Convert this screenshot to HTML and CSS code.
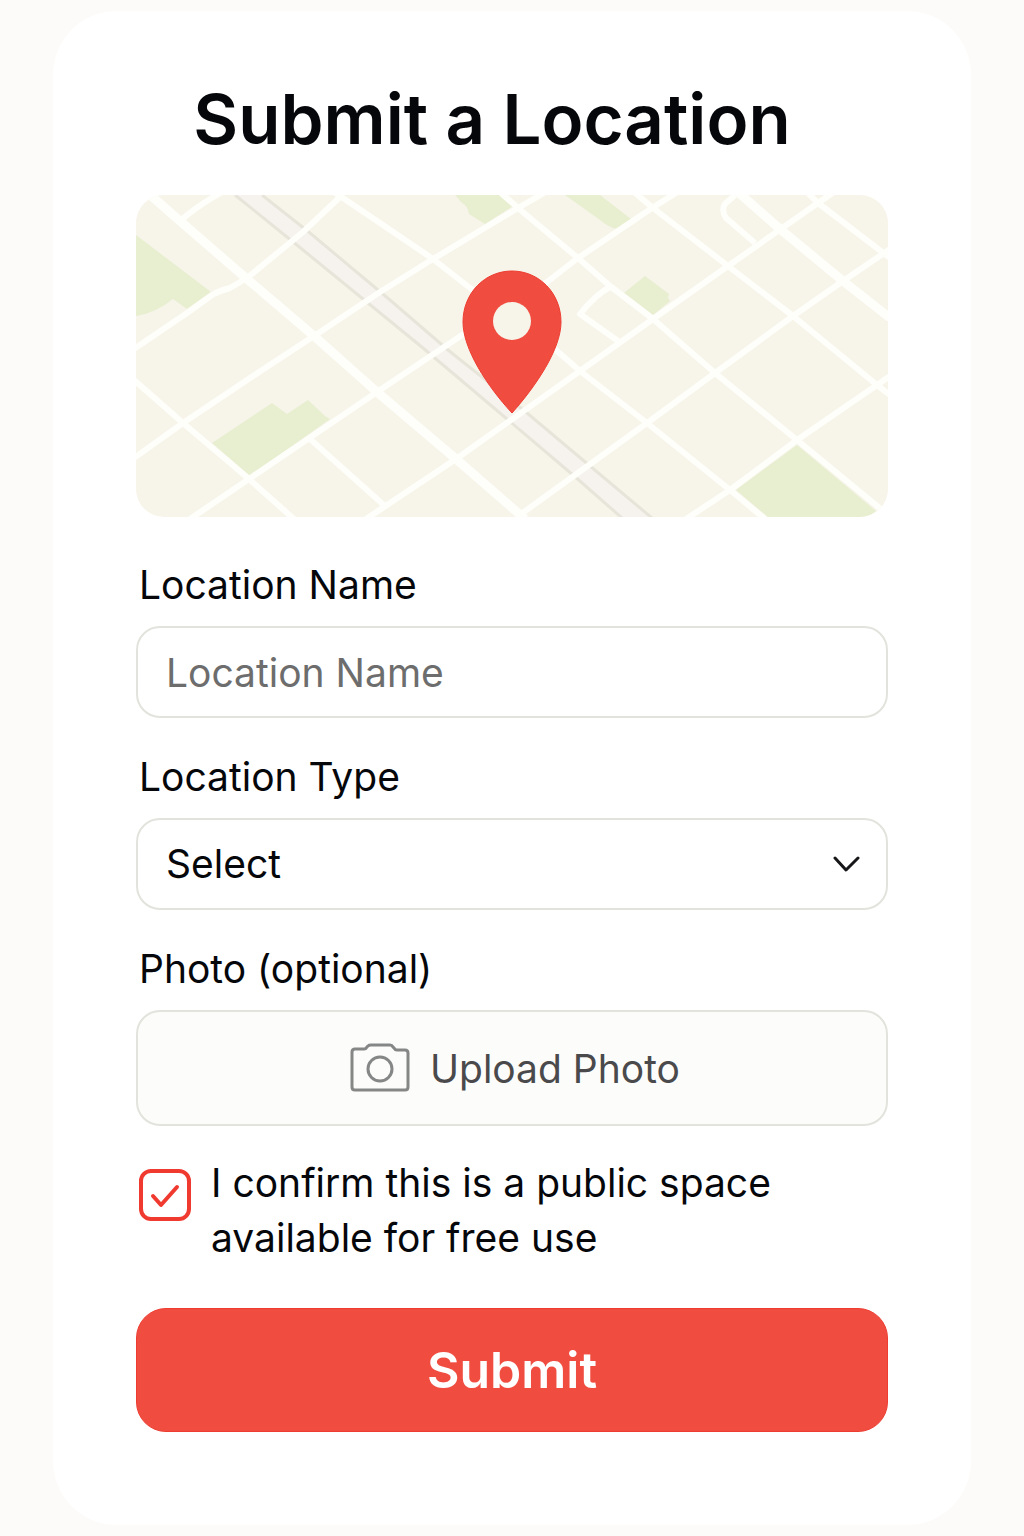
FILE: index.html
```html
<!DOCTYPE html>
<html lang="en">
<head>
<meta charset="utf-8">
<meta name="viewport" content="width=device-width, initial-scale=1">
<title>Submit a Location</title>
<link rel="stylesheet" href="styles.css">
</head>
<body>
<main class="card">
  <h1 class="title">Submit a Location</h1>
  <svg class="map" viewBox="136 195 752 322" role="img" aria-label="Map with a pin at the chosen location">
    <rect class="land" x="136" y="195" width="752" height="322"/>
    <g class="park">
      <path d="M136 235 L211 292 L187 309 L173 299 Q156 313 136 316Z"/>
      <path d="M455 195 L501 195 L513 206 L485 224 L469 214 Q468 206 462 203Z"/>
      <path d="M565 195 L600 195 L631 219 L617 229 Q608 227 600 220Z"/>
      <path d="M645 276 L669 294 L668 298 L670 301 L653 315 L624 293Z"/>
      <path d="M212 443 L272 403 L287 414 L308 400 L325 416 L330 419 L250 476Z"/>
      <path d="M797 445 L876 511 L868 517 L768 517 L736 490Z"/>
    </g>
    <path class="rail-bed" d="M235 195 L262 195 L310 233 L390 300 L448 350 L527 413 L590 466 L651 517 L620 517 L573 475 L507 419 L423 348 L390 321 L292 241Z"/>
    <path class="rail" d="M235 195 L292 241 L390 321 L423 348 L507 419 L573 475 L622 518 M262 195 L310 233 L390 300 L448 350 L527 413 L590 466 L652 518"/>
    <g class="road">
      <path d="M180 221 Q197 206 222 192"/>
      <path d="M134 349 L187 313 L212 295 Q219 291 230 288 L247 278 L303 232 L340 197"/>
      <path d="M334 192 L380 223 L433 259 L470 288 L557 351 L580 371 L647 423 L730 490 L765 519"/>
      <path d="M134 458 L183 423 L247 380 L314 336 L380 292 L433 259 L518 208 L544 193"/>
      <path d="M134 380 L183 423 L249 479 L295 520"/>
      <path d="M190 519 L249 479 L377 392 L462 335 L547 282 L578 258 L652 208 L676 193"/>
      <path d="M500 192 L518 208 L578 258 L610 286 L653 319 L715 373 L797 440 L888 515"/>
      <path d="M310 439 L386 507"/>
      <path d="M366 519 L456 459 L580 371 L653 319 L728 266 L818 203 L834 192"/>
      <path d="M517 517 L647 423 L715 373 L793 316 L843 281 L890 249"/>
      <path d="M686 519 L730 490 L797 440 L877 385 L890 376"/>
      <path d="M634 192 L653 208 L728 266 L793 316 L877 385 L890 395"/>
      <path d="M807 192 L818 203 L890 258"/>
      <path d="M755 243 L726 218 Q721 210 725 204 L735 195"/>
      <path d="M610 287 Q595 295 580 314 L618 341"/>
    </g>
    <path class="road avenue" d="M148 193 L180 221 L247 279 L314 336 L377 392 L456 459 L525 519 M738 192 L780 229 L843 281 L890 318"/>
    <path class="pin" d="M512 271 C539 271 561 293 561 322 C561 349 536 386 512 413 C487 386 463 349 463 322 C463 293 485 271 512 271Z"/>
    <circle class="land" cx="512" cy="321" r="19"/>
  </svg>
  <form class="form">
    <div class="field">
      <label class="label" for="name">Location Name</label>
      <input class="control" id="name" type="text" placeholder="Location Name">
    </div>
    <div class="field">
      <label class="label" for="type">Location Type</label>
      <div class="select">
        <select class="control" id="type"><option>Select</option></select>
        <svg class="chevron" viewBox="0 0 28 18" aria-hidden="true"><path d="M3 3 L14 15 L26 3"/></svg>
      </div>
    </div>
    <div class="field">
      <label class="label" for="photo">Photo (optional)</label>
      <button class="upload" id="photo" type="button">
        <svg class="camera" viewBox="0 0 60 50" aria-hidden="true"><path d="M5 6 H14 Q16 6 17 4 L18 3 Q19 2 21 2 H40 Q42 2 43 4 L44 5 Q45 7 47 7 H55 Q58 7 58 10 V44 Q58 47 55 47 H5 Q2 47 2 44 V9 Q2 6 5 6Z"/><circle cx="30" cy="26" r="12"/></svg>
        Upload Photo
      </button>
    </div>
    <div class="confirm">
      <span class="tick">
        <input class="box" id="confirm" type="checkbox" checked>
        <svg class="mark" viewBox="0 0 52 52" aria-hidden="true"><path d="M14 27 L22 36 L38 18"/></svg>
      </span>
      <label class="terms" for="confirm">I confirm this is a public space available for free use</label>
    </div>
    <button class="submit" type="submit">Submit</button>
  </form>
</main>
</body>
</html>
```
FILE: styles.css
```css
* {
  box-sizing: border-box;
}

body {
  margin: 0;
  padding: 11px 53px;
  background: #fcfbf9;
  color: #06070b;
  font-family: Inter, "Liberation Sans", sans-serif;
  font-size: 39px;
}

.card {
  padding: 68px 83px 93px;
  border-radius: 64px;
  background: #fff;
}

.title {
  margin: 0 40px 36px 0;
  font-size: 69px;
  font-weight: 600;
  line-height: 80px;
  text-align: center;
}

.map {
  display: block;
  width: 100%;
  border-radius: 28px;
}

.land { fill: #f7f4e9; }
.park { fill: #e8efd0; }
.rail-bed { fill: #f6f3ef; }

.rail {
  fill: none;
  stroke: #e7e5da;
  stroke-width: 3;
}

.road {
  fill: none;
  stroke: #fefefa;
  stroke-width: 6;
  stroke-linejoin: round;
}

.avenue { stroke-width: 9; }

.pin {
  fill: #f04d40;
  stroke: #ee3c31;
}

.form {
  display: flex;
  flex-direction: column;
  margin-top: 44px;
}

.field {
  display: flex;
  flex-direction: column;
  gap: 17px;
}

.field + .field { margin-top: 35px; }

.label {
  padding-left: 3px;
  line-height: 48px;
}

.control,
.upload {
  width: 100%;
  height: 92px;
  margin: 0;
  padding: 0 28px;
  border: 2px solid #e3e3dd;
  border-radius: 24px;
  background: #fff;
  color: inherit;
  font: inherit;
}

.control::placeholder {
  color: #6d6d6d;
  opacity: 1;
}

.select {
  display: grid;
  align-items: center;
}

.select > * { grid-area: 1 / 1; }

select.control {
  appearance: none;
  padding-bottom: 2px;
}

.chevron {
  justify-self: end;
  width: 28px;
  margin-right: 28px;
  fill: none;
  stroke: #17171a;
  stroke-width: 3;
  stroke-linecap: round;
  stroke-linejoin: round;
  pointer-events: none;
}

.upload {
  display: flex;
  align-items: center;
  justify-content: center;
  gap: 20px;
  height: 116px;
  padding-left: 34px;
  background: #fcfcfa;
  color: #4a4a4c;
}

.camera {
  width: 60px;
  fill: none;
  stroke: #858786;
  stroke-width: 3;
}

.confirm {
  display: flex;
  gap: 20px;
  margin-top: 29px;
  padding-left: 3px;
}

.tick {
  display: grid;
  flex: none;
  width: 52px;
  height: 52px;
  margin-top: 14px;
}

.tick > * { grid-area: 1 / 1; }

.box {
  appearance: none;
  width: 52px;
  height: 52px;
  margin: 0;
  border: 4px solid #f03a30;
  border-radius: 12px;
  background: #fff;
}

.mark {
  visibility: hidden;
  fill: none;
  stroke: #f03a30;
  stroke-width: 4;
  stroke-linecap: round;
  stroke-linejoin: round;
  pointer-events: none;
}

.box:checked + .mark { visibility: visible; }

.terms { line-height: 55px; }

.submit {
  height: 124px;
  margin-top: 43px;
  border: 1px solid #ee3c31;
  border-radius: 30px;
  background: #f04d40;
  color: #fff;
  font: inherit;
  font-size: 50px;
  font-weight: 600;
}
```
